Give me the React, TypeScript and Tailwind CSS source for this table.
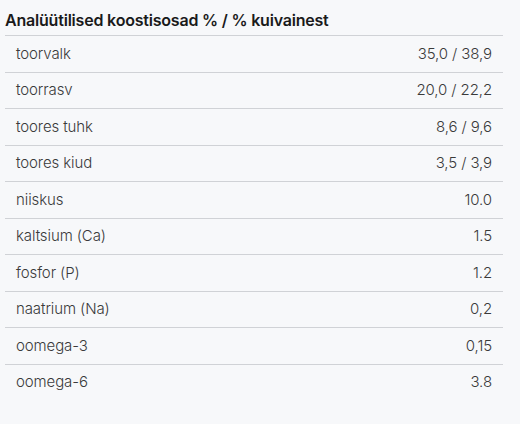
import React from "react";

const rows: [string, string][] = [
  ["toorvalk", "35,0 / 38,9"],
  ["toorrasv", "20,0 / 22,2"],
  ["toores tuhk", "8,6 / 9,6"],
  ["toores kiud", "3,5 / 3,9"],
  ["niiskus", "10.0"],
  ["kaltsium (Ca)", "1.5"],
  ["fosfor (P)", "1.2"],
  ["naatrium (Na)", "0,2"],
  ["oomega-3", "0,15"],
  ["oomega-6", "3.8"],
];

export default function App() {
  return (
    <div
      className="w-[520px] h-[424px] bg-[#f7f8fa] px-[5px] overflow-hidden"
      style={{ fontFamily: "Inter, 'Noto Sans', sans-serif" }}
    >
      <div className="w-[498px]">
        <div className="h-[35px] flex items-center pt-[4px] text-[16px] font-semibold text-[#1a1a1a] tracking-[-0.2px]">
          Analüütilised koostisosad % / % kuivainest
        </div>
        {rows.map(([k, v]) => (
          <div
            key={k}
            className="h-[36.5px] flex items-center justify-between px-[11px] text-[15px] font-light text-[#3a3a3a] tracking-[-0.1px] border-t border-[#d0d2d6]"
          >
            <span>{k}</span>
            <span>{v}</span>
          </div>
        ))}
      </div>
    </div>
  );
}
